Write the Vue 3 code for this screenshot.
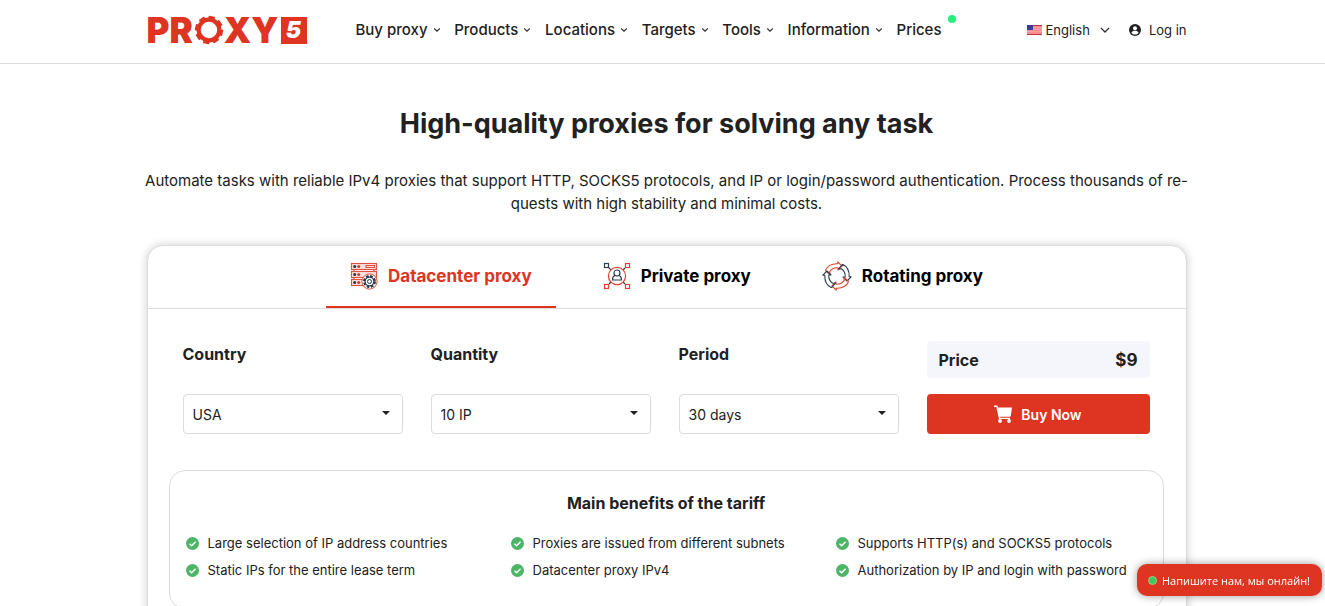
<script setup>
import { ref } from 'vue'

const nav = ['Buy proxy', 'Products', 'Locations', 'Targets', 'Tools', 'Information']
const tabs = [
  { id: 'datacenter', label: 'Datacenter proxy' },
  { id: 'private', label: 'Private proxy' },
  { id: 'rotating', label: 'Rotating proxy' },
]
const active = ref('datacenter')
const fields = ref([
  { id: 'country', label: 'Country', value: 'USA', options: ['USA', 'Germany', 'France'] },
  { id: 'quantity', label: 'Quantity', value: '10 IP', options: ['10 IP', '20 IP', '50 IP'] },
  { id: 'period', label: 'Period', value: '30 days', options: ['30 days', '60 days', '90 days'] },
])
const benefits = [
  'Large selection of IP address countries',
  'Proxies are issued from different subnets',
  'Supports HTTP(s) and SOCKS5 protocols',
  'Static IPs for the entire lease term',
  'Datacenter proxy IPv4',
  'Authorization by IP and login with password',
]
const teeth = [0, 45, 90, 135, 180, 225, 270, 315]
</script>

<template>
  <div class="page">
    <header class="header">
      <div class="container bar">
        <a class="logo" href="#" aria-label="Proxy5">
          <span>PR</span>
          <svg class="logo-gear" viewBox="0 0 30 30" aria-hidden="true">
            <circle cx="15" cy="15" r="10.3" fill="none" stroke="#dd3522" stroke-width="4.2" />
            <rect v-for="a in teeth" :key="a" x="11.8" y="1" width="6.4" height="4.5" rx="0.6" fill="#dd3522" :transform="`rotate(${a + 12} 15 15)`" />
          </svg>
          <span>XY</span>
          <span class="logo-five">5</span>
        </a>
        <nav class="nav">
          <a v-for="item in nav" :key="item" href="#">
            {{ item }}
            <svg class="chev" viewBox="0 0 8 8" aria-hidden="true"><path d="M1.2 2.5 4 5.2 6.8 2.5" /></svg>
          </a>
          <a href="#" class="prices">Prices<i class="dot"></i></a>
        </nav>
        <div class="account">
          <button type="button" class="lang">
            <svg class="flag" viewBox="0 0 15 10" aria-hidden="true">
              <rect width="15" height="10" fill="#f98c90" />
              <path d="M0 .5h15M0 9.5h15" stroke="#c8343c" />
              <path d="M6 2.5h9M6 4.5h9M0 6.5h15" stroke="#fba7a9" stroke-width=".8" />
              <rect width="6" height="5" fill="#3c3b98" />
            </svg>
            English
            <svg class="chev big" viewBox="0 0 8 8" aria-hidden="true"><path d="M.7 2.3 4 5.6 7.3 2.3" /></svg>
          </button>
          <a href="#" class="login">
            <svg viewBox="0 0 24 24" aria-hidden="true">
              <circle cx="12" cy="12" r="12" fill="#212121" />
              <circle cx="12" cy="8.6" r="4" fill="#fff" />
              <path d="M4.8 17.4c1.2-2.7 4.2-3.9 7.2-3.9s6 1.2 7.2 3.9c-1.7 2.4-4.2 3.8-7.2 3.8s-5.5-1.4-7.2-3.8z" fill="#fff" />
            </svg>
            Log in
          </a>
        </div>
      </div>
    </header>

    <main class="container">
      <h1>High-quality proxies for solving any task</h1>
      <p class="lead">
        Automate tasks with reliable IPv4 proxies that support HTTP, SOCKS5 protocols, and IP or login/password authentication. Process thousands of re-<br />quests with high stability and minimal costs.
      </p>

      <section class="card">
        <div class="tabs" role="tablist">
          <button v-for="t in tabs" :key="t.id" type="button" role="tab" class="tab" :class="{ active: active === t.id }" :aria-selected="active === t.id" @click="active = t.id">
            <svg v-if="t.id === 'datacenter'" class="tab-icon" viewBox="0 0 28 28" fill="none" aria-hidden="true">
              <g stroke="#e2503f" stroke-width="1.1">
                <path d="M4 7.5v2M24 7.5v2M4 15.5v2" />
                <rect x="1.5" y="1.5" width="25" height="6" fill="#fbe0dc" />
                <rect x="1.5" y="9.5" width="25" height="6" fill="#fbe0dc" />
                <rect x="1.5" y="17.5" width="18" height="6" fill="#fbe0dc" />
                <path d="M16 3.5h8.5v2H16z" />
              </g>
              <g fill="#22384d"><circle cx="4.7" cy="4.5" r="1.5" /><circle cx="4.7" cy="12.5" r="1.5" /><circle cx="4.7" cy="20.5" r="1.5" /></g>
              <g fill="#dd3522"><circle cx="8.7" cy="4.5" r="1.5" /><circle cx="8.7" cy="12.5" r="1.5" /><circle cx="8.7" cy="20.5" r="1.5" /></g>
              <circle cx="19.5" cy="19.5" r="7.6" fill="#fff" stroke="#e2503f" stroke-width="1" />
              <circle cx="19.5" cy="19.5" r="5.5" stroke="#22384d" stroke-width="2" stroke-dasharray="2.7 1.62" />
              <circle cx="19.5" cy="19.5" r="4.4" fill="#fff" stroke="#22384d" stroke-width="1.2" />
              <circle cx="19.5" cy="19.5" r="2" stroke="#22384d" stroke-width="1" />
            </svg>
            <svg v-else-if="t.id === 'private'" class="tab-icon" viewBox="0 0 28 28" fill="none" stroke-width="1.2" aria-hidden="true">
              <g stroke="#2c3e50">
                <rect x="1.5" y="1.5" width="4" height="4" />
                <path d="m5.7 5.7 2.3 2.3M20 8l2-2M8 20l-2 2M20 20l2 2" />
                <circle cx="14" cy="11" r="3" />
                <path d="M11.7 13.5c-1.6.7-2.2 1.9-2.2 4.500h9c0-2.600-.6-3.800-2.200-4.500" />
              </g>
              <g stroke="#e2402e">
                <circle cx="14" cy="14" r="8.6" />
                <rect x="22.5" y="1.5" width="4" height="4" />
                <rect x="1.5" y="22.5" width="4" height="4" />
                <rect x="22.5" y="22.5" width="4" height="4" />
              </g>
            </svg>
            <svg v-else class="tab-icon wide" viewBox="0 0 30 30" fill="none" stroke-width="1.1" stroke-linejoin="round" aria-hidden="true">
              <g v-for="a in [0, 90, 180, 270]" :key="a" :transform="`rotate(${a} 15 15)`" :stroke="a % 180 ? '#2c3e50' : '#e2402e'">
                <path d="M3.3 9.5C5.5 5 10.5 2.5 15.8 2.8V.8L20 5l-4 4V6.8C12.5 6.5 9.5 8 7.7 10.6L8 13.5 3.3 9.5" />
              </g>
            </svg>
            <span>{{ t.label }}</span>
          </button>
        </div>

        <form class="order" @submit.prevent>
          <div v-for="f in fields" :key="f.id" class="field">
            <label :for="f.id">{{ f.label }}</label>
            <div class="select">
              <select :id="f.id" v-model="f.value">
                <option v-for="o in f.options" :key="o">{{ o }}</option>
              </select>
              <svg viewBox="0 0 8 4" aria-hidden="true"><path d="M0 0h8L4 4z" fill="#212121" /></svg>
            </div>
          </div>
          <div class="checkout">
            <div class="price"><span>Price</span><span class="amount">$9</span></div>
            <button type="submit" class="buy">
              <svg viewBox="0 0 18 18" aria-hidden="true">
                <path d="M0 .5h3.200l1 2H18l-1.200 8.200c-.1.700-.6 1.100-1.300 1.100H6l.3 1H16v1.200H5L2.300 2H0z" fill="#fff" />
                <circle cx="6" cy="16" r="1.9" fill="#fff" /><circle cx="15" cy="16" r="1.9" fill="#fff" />
              </svg>
              Buy Now
            </button>
          </div>
        </form>

        <section class="benefits">
          <h2>Main benefits of the tariff</h2>
          <ul>
            <li v-for="b in benefits" :key="b">
              <svg viewBox="0 0 13 13" aria-hidden="true">
                <circle cx="6.5" cy="6.5" r="6.5" fill="#4db568" />
                <path d="m3.5 6.7 2.1 2.1 4-4.1" fill="none" stroke="#fff" stroke-width="1.4" />
              </svg>
              {{ b }}
            </li>
          </ul>
        </section>
      </section>
    </main>

    <button type="button" class="chat"><i></i>Напишите нам, мы онлайн!</button>
  </div>
</template>

<style>
body {
  background: #fff;
}
</style>

<style scoped>
.page {
  height: 100vh;
  overflow: hidden;
  color: #212121;
  font-family: Inter, "Liberation Sans", sans-serif;
  font-size: 15px;
}
.page * {
  box-sizing: border-box;
}
a {
  color: inherit;
  text-decoration: none;
}
button,
select {
  font: inherit;
  color: inherit;
}
button {
  border: 0;
  background: none;
  padding: 0;
  cursor: pointer;
}
.container {
  max-width: 1040px;
  margin: 0 auto;
  position: relative;
  left: 4px;
}
.header {
  border-bottom: 1px solid #dcdcdc;
}
.bar {
  display: flex;
  align-items: center;
  height: 63px;
  padding-bottom: 3px;
}
.logo {
  display: flex;
  align-items: center;
  color: #dd3522;
  font-size: 35px;
  line-height: 36px;
  font-weight: 900;
  width: 160px;
  height: 36px;
}
.logo-gear {
  width: 30px;
  height: 30px;
  flex: none;
  margin-left: 1px;
}
.logo-five {
  display: flex;
  align-items: center;
  justify-content: center;
  width: 26px;
  height: 27px;
  margin-left: 2px;
  background: #dd3522;
  color: #fff;
  font-size: 23px;
  font-style: italic;
}
.nav {
  display: flex;
  justify-content: space-between;
  width: 586px;
  margin-left: 49px;
  font-weight: 500;
  white-space: nowrap;
}
.nav a {
  display: flex;
  align-items: center;
  gap: 5px;
  line-height: 20px;
}
.chev {
  width: 8px;
  height: 8px;
  fill: none;
  stroke: #333;
  stroke-width: 1.1;
}
.chev.big {
  width: 10px;
  height: 10px;
  margin-left: 6px;
}
.prices {
  position: relative;
}
.dot {
  position: absolute;
  top: -5px;
  right: -14px;
  width: 8px;
  height: 8px;
  border-radius: 50%;
  background: #23f07c;
}
.account {
  display: flex;
  align-items: center;
  justify-content: space-between;
  width: 160px;
  margin-left: auto;
  font-size: 13px;
}
.lang,
.login {
  display: flex;
  align-items: center;
  gap: 4px;
}
.flag {
  width: 15px;
  height: 10px;
}
.login {
  gap: 8px;
}
.login svg {
  width: 12px;
  height: 12px;
}
h1 {
  margin: 42px 0 0;
  text-align: center;
  font-size: 27px;
  line-height: 36px;
  font-weight: 700;
}
.lead {
  margin: 27px -16px 0;
  text-align: center;
  line-height: 23px;
  font-size: 15px;
}
.card {
  margin-top: 30px;
  height: 420px;
  border: 1px solid #dcdcdc;
  border-radius: 16px;
  background: #fff;
  box-shadow: 0 0 10px rgba(0, 0, 0, 0.2);
}
.tabs {
  display: flex;
  justify-content: center;
  gap: 23px;
  border-bottom: 1px solid #dcdcdc;
}
.tab {
  display: flex;
  align-items: center;
  gap: 10px;
  height: 62px;
  padding: 0 24px;
  border-bottom: 2px solid transparent;
  color: #000;
  font-size: 17px;
  font-weight: 700;
}
.tab.active {
  border-color: #dd3522;
  color: #dd3522;
}
.tab-icon {
  width: 28px;
  height: 28px;
}
.tab-icon.wide {
  width: 30px;
  height: 30px;
}
.order {
  display: flex;
  gap: 28px;
  padding: 32px 36px 36px 35px;
}
.field,
.checkout {
  flex: 220 1 0;
  display: flex;
  flex-direction: column;
  justify-content: space-between;
  height: 93px;
}
.checkout {
  flex-grow: 223;
}
.field label {
  font-size: 16px;
  line-height: 26px;
  font-weight: 700;
}
.select {
  position: relative;
}
.select select {
  display: block;
  appearance: none;
  width: 100%;
  height: 40px;
  padding: 0 30px 0 9px;
  border: 1px solid #dcdcdc;
  border-radius: 4px;
  background: #fff;
  font-size: 14px;
}
.select svg {
  position: absolute;
  right: 13px;
  top: 17px;
  width: 8px;
  height: 4px;
  pointer-events: none;
}
.price {
  display: flex;
  align-items: center;
  justify-content: space-between;
  height: 37px;
  padding: 0 12px;
  border-radius: 4px;
  background: #f5f6fb;
  font-size: 16px;
  font-weight: 700;
}
.amount {
  font-size: 17px;
}
.buy {
  display: flex;
  align-items: center;
  justify-content: center;
  gap: 9px;
  height: 40px;
  border-radius: 4px;
  background: #dd3522;
  color: #fff;
  font-size: 14px;
  font-weight: 600;
}
.buy svg {
  width: 18px;
  height: 18px;
}
.benefits {
  margin: 0 22px 0 21px;
  padding: 20px 16px 24px;
  height: 139px;
  border: 1px solid #dcdcdc;
  border-radius: 16px;
}
h2 {
  margin: 0;
  text-align: center;
  font-size: 16px;
  line-height: 24px;
  font-weight: 700;
}
ul {
  display: grid;
  grid-template-columns: 325px 325px auto;
  margin: 15px 0 0;
  padding: 0;
  list-style: none;
  font-size: 13px;
  line-height: 27px;
  white-space: nowrap;
}
li {
  display: flex;
  align-items: center;
  gap: 9px;
}
li svg {
  width: 13px;
  height: 13px;
}
.chat {
  position: fixed;
  right: 3px;
  bottom: 10px;
  display: flex;
  align-items: center;
  gap: 5px;
  height: 32px;
  padding: 0 12px 0 11px;
  border-radius: 10px;
  background: #dd3522;
  color: #fff;
  box-shadow: 0 0 8px rgba(0, 0, 0, 0.4);
  font: 11px "Open Sans", "Noto Sans", sans-serif;
}
.chat i {
  width: 9px;
  height: 9px;
  border-radius: 50%;
  background: #3fc75a;
  border: 1px solid #a9c48e;
}
</style>
